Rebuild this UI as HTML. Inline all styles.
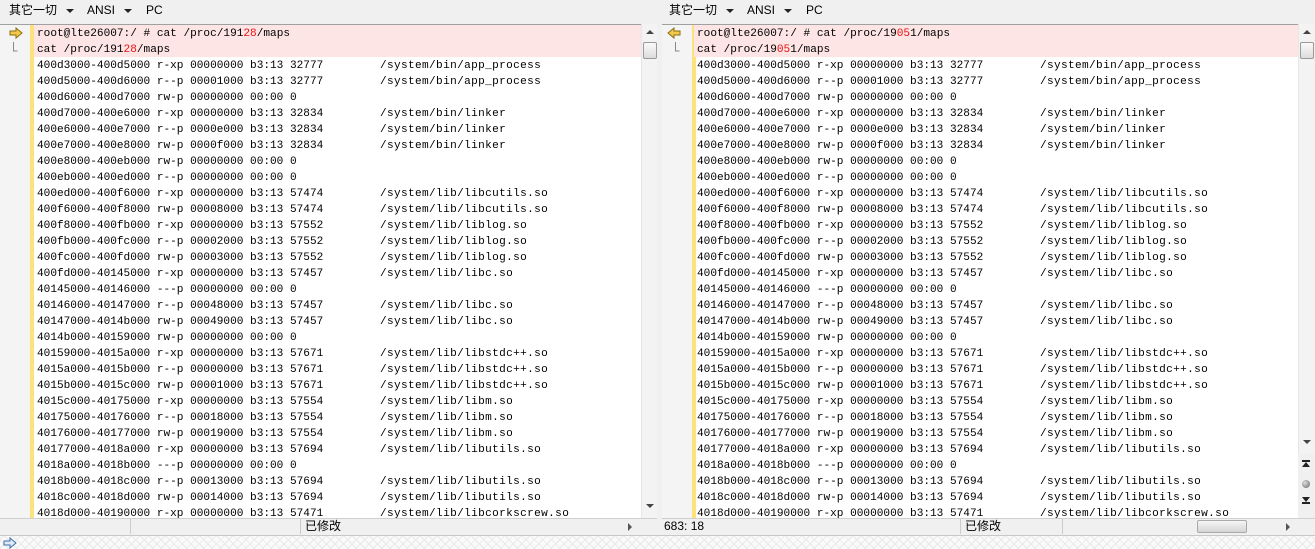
<!DOCTYPE html>
<html><head><meta charset="utf-8"><style>
*{margin:0;padding:0;box-sizing:border-box}
body{width:1315px;height:549px;overflow:hidden;background:#f0f0f0;font-family:"Liberation Sans","Noto Sans CJK SC",sans-serif;position:relative}
.tb{position:absolute;top:0;height:22px;font-size:12px;color:#000;line-height:20px}
.tb span{position:absolute;top:0;white-space:nowrap}
.tri{display:inline-block;width:0;height:0;border-left:4px solid transparent;border-right:4px solid transparent;border-top:4px solid #222;vertical-align:middle}
.pane{position:absolute;top:24px;height:494px;background:#fff;border-top:1px solid #a0a0a0;overflow:hidden}
.gut{position:absolute;left:0;top:0;width:30px;height:100%;background:#f4f4f4}
.yb{position:absolute;left:30px;top:0;width:4px;height:100%;background:#fbe27a}
.rows{position:absolute;left:34px;top:0;right:0;font-family:"Liberation Mono",monospace;font-size:11.1px;color:#000}
.r{position:relative;height:16px;line-height:19px;padding-left:3px;white-space:pre}
.r.p{background:#fde5e5}
.r b{font-weight:normal;color:#e81010}
.r i{font-style:normal;position:absolute;left:346px;letter-spacing:0.35px}
.sb{position:absolute;top:24px;width:16px;height:494px;background:#f3f3f3;border-left:1px solid #e6e6e6}
.thumb{position:absolute;left:1px;top:18px;width:14px;height:17px;background:linear-gradient(#fafafa,#dcdcdc);border:1px solid #9a9a9a;border-radius:2px}
.st{position:absolute;top:518px;height:16px;background:#f0f0f0;border-top:1px solid #d0d0d0;font-size:12px;line-height:15px}
.bot{position:absolute;top:535px;left:0;width:1315px;height:14px;background-color:#fafafa;background-image:repeating-linear-gradient(45deg,#e9e9e9 0 1px,transparent 1px 6px),repeating-linear-gradient(-45deg,#e9e9e9 0 1px,transparent 1px 6px);border-top:1px solid #c8c8c8}
</style></head><body>
<div class="tb" style="left:0;width:1315px">
<span style="left:9px">其它一切 <span class="tri" style="position:static;margin-left:6px"></span></span>
<span style="left:87px">ANSI <span class="tri" style="position:static;margin-left:6px"></span></span>
<span style="left:146px">PC</span>
<span style="left:669px">其它一切 <span class="tri" style="position:static;margin-left:6px"></span></span>
<span style="left:747px">ANSI <span class="tri" style="position:static;margin-left:6px"></span></span>
<span style="left:806px">PC</span>
</div>

<div class="pane" style="left:0;width:641px">
<div class="gut"></div><div class="yb"></div>
<svg style="position:absolute;left:9px;top:2px" width="14" height="26"><path d="M1 4h6V1l6 5-6 5V8H1z" fill="#f2c94c" stroke="#8a6d10" stroke-width="1"/><path d="M4.5 15v9h4" fill="none" stroke="#888"/></svg>
<div class="rows">
<div class="r p">root@lte26007:/ # cat /proc/191<b>28</b>/maps</div>
<div class="r p">cat /proc/191<b>28</b>/maps</div>
<div class="r">400d3000-400d5000 r-xp 00000000 b3:13 32777<i>/system/bin/app_process</i></div>
<div class="r">400d5000-400d6000 r--p 00001000 b3:13 32777<i>/system/bin/app_process</i></div>
<div class="r">400d6000-400d7000 rw-p 00000000 00:00 0</div>
<div class="r">400d7000-400e6000 r-xp 00000000 b3:13 32834<i>/system/bin/linker</i></div>
<div class="r">400e6000-400e7000 r--p 0000e000 b3:13 32834<i>/system/bin/linker</i></div>
<div class="r">400e7000-400e8000 rw-p 0000f000 b3:13 32834<i>/system/bin/linker</i></div>
<div class="r">400e8000-400eb000 rw-p 00000000 00:00 0</div>
<div class="r">400eb000-400ed000 r--p 00000000 00:00 0</div>
<div class="r">400ed000-400f6000 r-xp 00000000 b3:13 57474<i>/system/lib/libcutils.so</i></div>
<div class="r">400f6000-400f8000 rw-p 00008000 b3:13 57474<i>/system/lib/libcutils.so</i></div>
<div class="r">400f8000-400fb000 r-xp 00000000 b3:13 57552<i>/system/lib/liblog.so</i></div>
<div class="r">400fb000-400fc000 r--p 00002000 b3:13 57552<i>/system/lib/liblog.so</i></div>
<div class="r">400fc000-400fd000 rw-p 00003000 b3:13 57552<i>/system/lib/liblog.so</i></div>
<div class="r">400fd000-40145000 r-xp 00000000 b3:13 57457<i>/system/lib/libc.so</i></div>
<div class="r">40145000-40146000 ---p 00000000 00:00 0</div>
<div class="r">40146000-40147000 r--p 00048000 b3:13 57457<i>/system/lib/libc.so</i></div>
<div class="r">40147000-4014b000 rw-p 00049000 b3:13 57457<i>/system/lib/libc.so</i></div>
<div class="r">4014b000-40159000 rw-p 00000000 00:00 0</div>
<div class="r">40159000-4015a000 r-xp 00000000 b3:13 57671<i>/system/lib/libstdc++.so</i></div>
<div class="r">4015a000-4015b000 r--p 00000000 b3:13 57671<i>/system/lib/libstdc++.so</i></div>
<div class="r">4015b000-4015c000 rw-p 00001000 b3:13 57671<i>/system/lib/libstdc++.so</i></div>
<div class="r">4015c000-40175000 r-xp 00000000 b3:13 57554<i>/system/lib/libm.so</i></div>
<div class="r">40175000-40176000 r--p 00018000 b3:13 57554<i>/system/lib/libm.so</i></div>
<div class="r">40176000-40177000 rw-p 00019000 b3:13 57554<i>/system/lib/libm.so</i></div>
<div class="r">40177000-4018a000 r-xp 00000000 b3:13 57694<i>/system/lib/libutils.so</i></div>
<div class="r">4018a000-4018b000 ---p 00000000 00:00 0</div>
<div class="r">4018b000-4018c000 r--p 00013000 b3:13 57694<i>/system/lib/libutils.so</i></div>
<div class="r">4018c000-4018d000 rw-p 00014000 b3:13 57694<i>/system/lib/libutils.so</i></div>
<div class="r">4018d000-40190000 r-xp 00000000 b3:13 57471<i>/system/lib/libcorkscrew.so</i></div>
</div></div>
<div class="sb" style="left:641px"><div style="position:absolute;left:4px;top:6px;border-left:4px solid transparent;border-right:4px solid transparent;border-bottom:4px solid #444"></div><div class="thumb"></div><div style="position:absolute;left:4px;top:480px;border-left:4px solid transparent;border-right:4px solid transparent;border-top:4px solid #444"></div></div>
<div style="position:absolute;left:657px;top:22px;width:5px;height:513px;background:#f0f0f0"></div>

<div class="pane" style="left:662px;width:636px">
<div class="gut"></div><div class="yb"></div>
<svg style="position:absolute;left:5px;top:2px" width="14" height="26"><path d="M13 4H7V1L1 6l6 5V8h6z" fill="#f2c94c" stroke="#8a6d10" stroke-width="1"/><path d="M8.5 15v9h4" fill="none" stroke="#888"/></svg>
<div class="rows" style="left:32px">
<div class="r p">root@lte26007:/ # cat /proc/19<b>05</b>1/maps</div>
<div class="r p">cat /proc/19<b>05</b>1/maps</div>
<div class="r">400d3000-400d5000 r-xp 00000000 b3:13 32777<i>/system/bin/app_process</i></div>
<div class="r">400d5000-400d6000 r--p 00001000 b3:13 32777<i>/system/bin/app_process</i></div>
<div class="r">400d6000-400d7000 rw-p 00000000 00:00 0</div>
<div class="r">400d7000-400e6000 r-xp 00000000 b3:13 32834<i>/system/bin/linker</i></div>
<div class="r">400e6000-400e7000 r--p 0000e000 b3:13 32834<i>/system/bin/linker</i></div>
<div class="r">400e7000-400e8000 rw-p 0000f000 b3:13 32834<i>/system/bin/linker</i></div>
<div class="r">400e8000-400eb000 rw-p 00000000 00:00 0</div>
<div class="r">400eb000-400ed000 r--p 00000000 00:00 0</div>
<div class="r">400ed000-400f6000 r-xp 00000000 b3:13 57474<i>/system/lib/libcutils.so</i></div>
<div class="r">400f6000-400f8000 rw-p 00008000 b3:13 57474<i>/system/lib/libcutils.so</i></div>
<div class="r">400f8000-400fb000 r-xp 00000000 b3:13 57552<i>/system/lib/liblog.so</i></div>
<div class="r">400fb000-400fc000 r--p 00002000 b3:13 57552<i>/system/lib/liblog.so</i></div>
<div class="r">400fc000-400fd000 rw-p 00003000 b3:13 57552<i>/system/lib/liblog.so</i></div>
<div class="r">400fd000-40145000 r-xp 00000000 b3:13 57457<i>/system/lib/libc.so</i></div>
<div class="r">40145000-40146000 ---p 00000000 00:00 0</div>
<div class="r">40146000-40147000 r--p 00048000 b3:13 57457<i>/system/lib/libc.so</i></div>
<div class="r">40147000-4014b000 rw-p 00049000 b3:13 57457<i>/system/lib/libc.so</i></div>
<div class="r">4014b000-40159000 rw-p 00000000 00:00 0</div>
<div class="r">40159000-4015a000 r-xp 00000000 b3:13 57671<i>/system/lib/libstdc++.so</i></div>
<div class="r">4015a000-4015b000 r--p 00000000 b3:13 57671<i>/system/lib/libstdc++.so</i></div>
<div class="r">4015b000-4015c000 rw-p 00001000 b3:13 57671<i>/system/lib/libstdc++.so</i></div>
<div class="r">4015c000-40175000 r-xp 00000000 b3:13 57554<i>/system/lib/libm.so</i></div>
<div class="r">40175000-40176000 r--p 00018000 b3:13 57554<i>/system/lib/libm.so</i></div>
<div class="r">40176000-40177000 rw-p 00019000 b3:13 57554<i>/system/lib/libm.so</i></div>
<div class="r">40177000-4018a000 r-xp 00000000 b3:13 57694<i>/system/lib/libutils.so</i></div>
<div class="r">4018a000-4018b000 ---p 00000000 00:00 0</div>
<div class="r">4018b000-4018c000 r--p 00013000 b3:13 57694<i>/system/lib/libutils.so</i></div>
<div class="r">4018c000-4018d000 rw-p 00014000 b3:13 57694<i>/system/lib/libutils.so</i></div>
<div class="r">4018d000-40190000 r-xp 00000000 b3:13 57471<i>/system/lib/libcorkscrew.so</i></div>
</div></div>
<div class="sb" style="left:1298px;height:430px"><div style="position:absolute;left:4px;top:6px;border-left:4px solid transparent;border-right:4px solid transparent;border-bottom:4px solid #444"></div><div class="thumb"></div><div style="position:absolute;left:4px;top:416px;border-left:4px solid transparent;border-right:4px solid transparent;border-top:4px solid #444"></div></div>
<div style="position:absolute;left:1298px;top:454px;width:17px;height:64px;background:#f0f0f0;font-size:9px;text-align:center;color:#222">
<div style="position:absolute;left:4px;top:6px;width:8px;height:8px;border-top:2px solid #222"></div><div style="position:absolute;left:4px;top:8px;border-left:4px solid transparent;border-right:4px solid transparent;border-bottom:5px solid #222"></div>
<div style="position:absolute;left:4px;top:26px;width:8px;height:8px;border-radius:50%;background:radial-gradient(circle at 35% 35%,#ddd,#666)"></div>
<div style="position:absolute;left:4px;top:43px;border-left:4px solid transparent;border-right:4px solid transparent;border-top:5px solid #222"></div><div style="position:absolute;left:4px;top:48px;width:8px;height:2px;background:#222"></div>
</div>

<div class="st" style="left:0;width:657px">
<div style="position:absolute;left:130px;top:0;width:1px;height:15px;background:#ccc"></div>
<div style="position:absolute;left:300px;top:0;width:1px;height:15px;background:#ccc"></div>
<span style="position:absolute;left:305px;top:0">已修改</span>
<div style="position:absolute;left:628px;top:4px;border-top:4px solid transparent;border-bottom:4px solid transparent;border-left:4px solid #555"></div>
</div>
<div class="st" style="left:662px;width:653px">
<span style="position:absolute;left:2px;top:0">683: 18</span>
<div style="position:absolute;left:298px;top:0;width:1px;height:15px;background:#ccc"></div>
<span style="position:absolute;left:303px;top:0">已修改</span>
<div style="position:absolute;left:400px;top:0;width:1px;height:15px;background:#ccc"></div>
<div style="position:absolute;left:535px;top:1px;width:50px;height:13px;background:linear-gradient(#f6f6f6,#d4d4d4);border:1px solid #aaa;border-radius:2px"></div>
<div style="position:absolute;left:624px;top:4px;border-top:4px solid transparent;border-bottom:4px solid transparent;border-left:4px solid #555"></div>
</div>
<div class="bot"><svg style="position:absolute;left:3px;top:1px" width="14" height="12"><path d="M1 4h6V1l6 5-6 5V8H1z" fill="#dfe9f7" stroke="#3b6ea8"/></svg></div>
</body></html>
